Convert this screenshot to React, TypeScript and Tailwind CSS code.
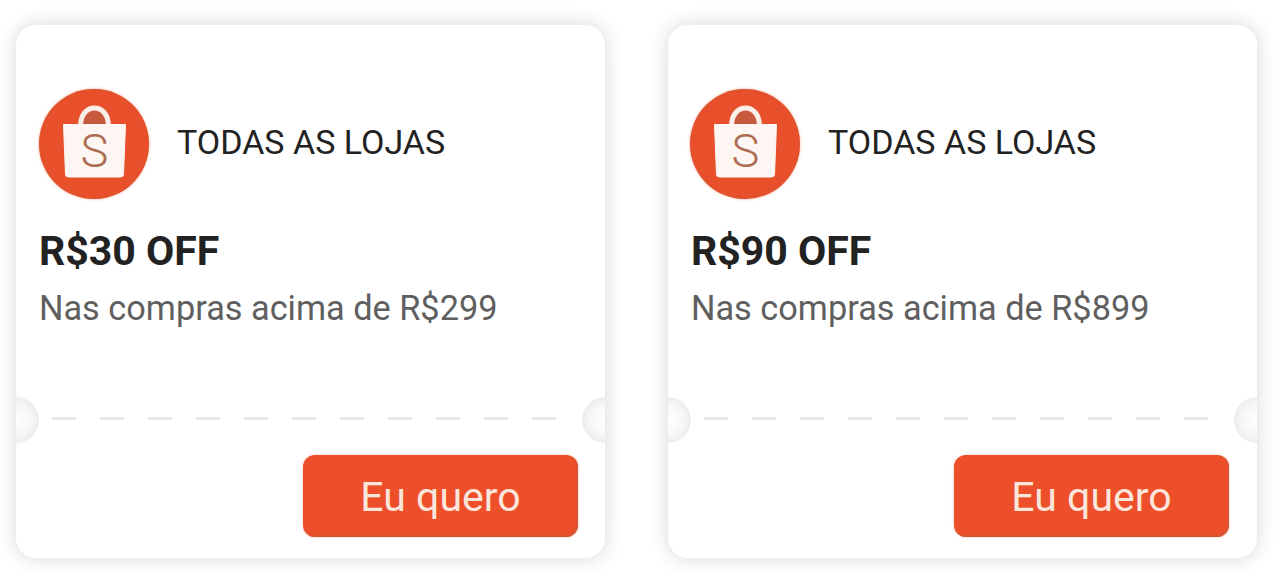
import React from 'react';

function ShopLogo() {
  return (
    <div className="w-[110px] h-[110px] rounded-full bg-[#e7502b] shrink-0 shadow-[0_0_3px_#f8a98f,inset_0_0_2px_#c9583c]">
      <svg viewBox="0 0 110 110" className="w-[110px] h-[110px]">
        <path d="M41.5 37C41.5 13 69.5 13 69.5 37" fill="#c9593c" stroke="#fbeee9" strokeWidth="5" />
        <path d="M24.5 35.5H86.5L84.5 85.5Q84.3 88 81.5 88H29.5Q26.7 88 26.5 85.5Z" fill="#fdf6f2" stroke="#fdf6f2" strokeLinejoin="round" />
        <text x="55.5" y="78" textAnchor="middle" fontSize="47" fontWeight="300" fill="#ad6d52" style={{ fontFamily: 'Roboto, sans-serif' }}>S</text>
      </svg>
    </div>
  );
}

function Notch({ side }: { side: 'left' | 'right' }) {
  return (
    <div
      className={
        side === 'left'
          ? 'absolute left-[-23px] top-[372px] w-[46px] h-[46px] rounded-full bg-[radial-gradient(circle,#ffffff_0%,#f6f6f6_50%,#dedede_100%)]'
          : 'absolute right-[-23px] top-[372px] w-[46px] h-[46px] rounded-full bg-[radial-gradient(circle,#ffffff_0%,#f6f6f6_50%,#dedede_100%)]'
      }
    />
  );
}

function Coupon({ amount, min, second }: { amount: string; min: string; second?: boolean }) {
  return (
    <div className="relative w-[589px] h-[533px] shrink-0 bg-white rounded-[20px] overflow-hidden shadow-[0_0_20px_rgba(0,0,0,0.16)]">
      <Notch side="left" />
      <Notch side="right" />

      <div className="pl-[23px] pt-[64px]">
        <div className={second ? 'flex items-center gap-[28px] ml-[-1px]' : 'flex items-center gap-[28px]'}>
          <ShopLogo />
          <span className="text-[34px] leading-[38px] text-[#222222] mb-[4px]">TODAS AS LOJAS</span>
        </div>
        <p className="mt-[27px] text-[41px] leading-[50px] font-bold text-[#222222]">{amount}</p>
        <p className="mt-[12px] text-[34.3px] leading-[40px] text-[#5f5f5f]">{min}</p>
      </div>

      {/* linha tracejada */}
      <div className="flex gap-[24px] pl-[36px] mt-[89px]">
        {Array.from({ length: 11 }).map((_, i) => (
          <div key={i} className="w-[24px] h-[3px] bg-[#e8e8e8]" />
        ))}
      </div>

      <div className={second ? 'flex justify-end pr-[28px] mt-[35px]' : 'flex justify-end pr-[27px] mt-[35px]'}>
        <button className="w-[275px] h-[82px] pt-[4px] rounded-[12px] bg-[#ec4f2a] text-[#fbe6dc] text-[41px] shadow-[inset_-1px_-1px_2px_#c4593d,0_0_3px_#fbc4b0]">
          Eu quero
        </button>
      </div>
    </div>
  );
}

export default function App() {
  return (
    <div className="w-[1280px] h-[572px] overflow-hidden bg-white flex gap-[63px] pl-[16px] pt-[25px] font-['Roboto',sans-serif]">
      <Coupon amount="R$30 OFF" min="Nas compras acima de R$299" />
      <Coupon amount="R$90 OFF" min="Nas compras acima de R$899" second />
    </div>
  );
}
